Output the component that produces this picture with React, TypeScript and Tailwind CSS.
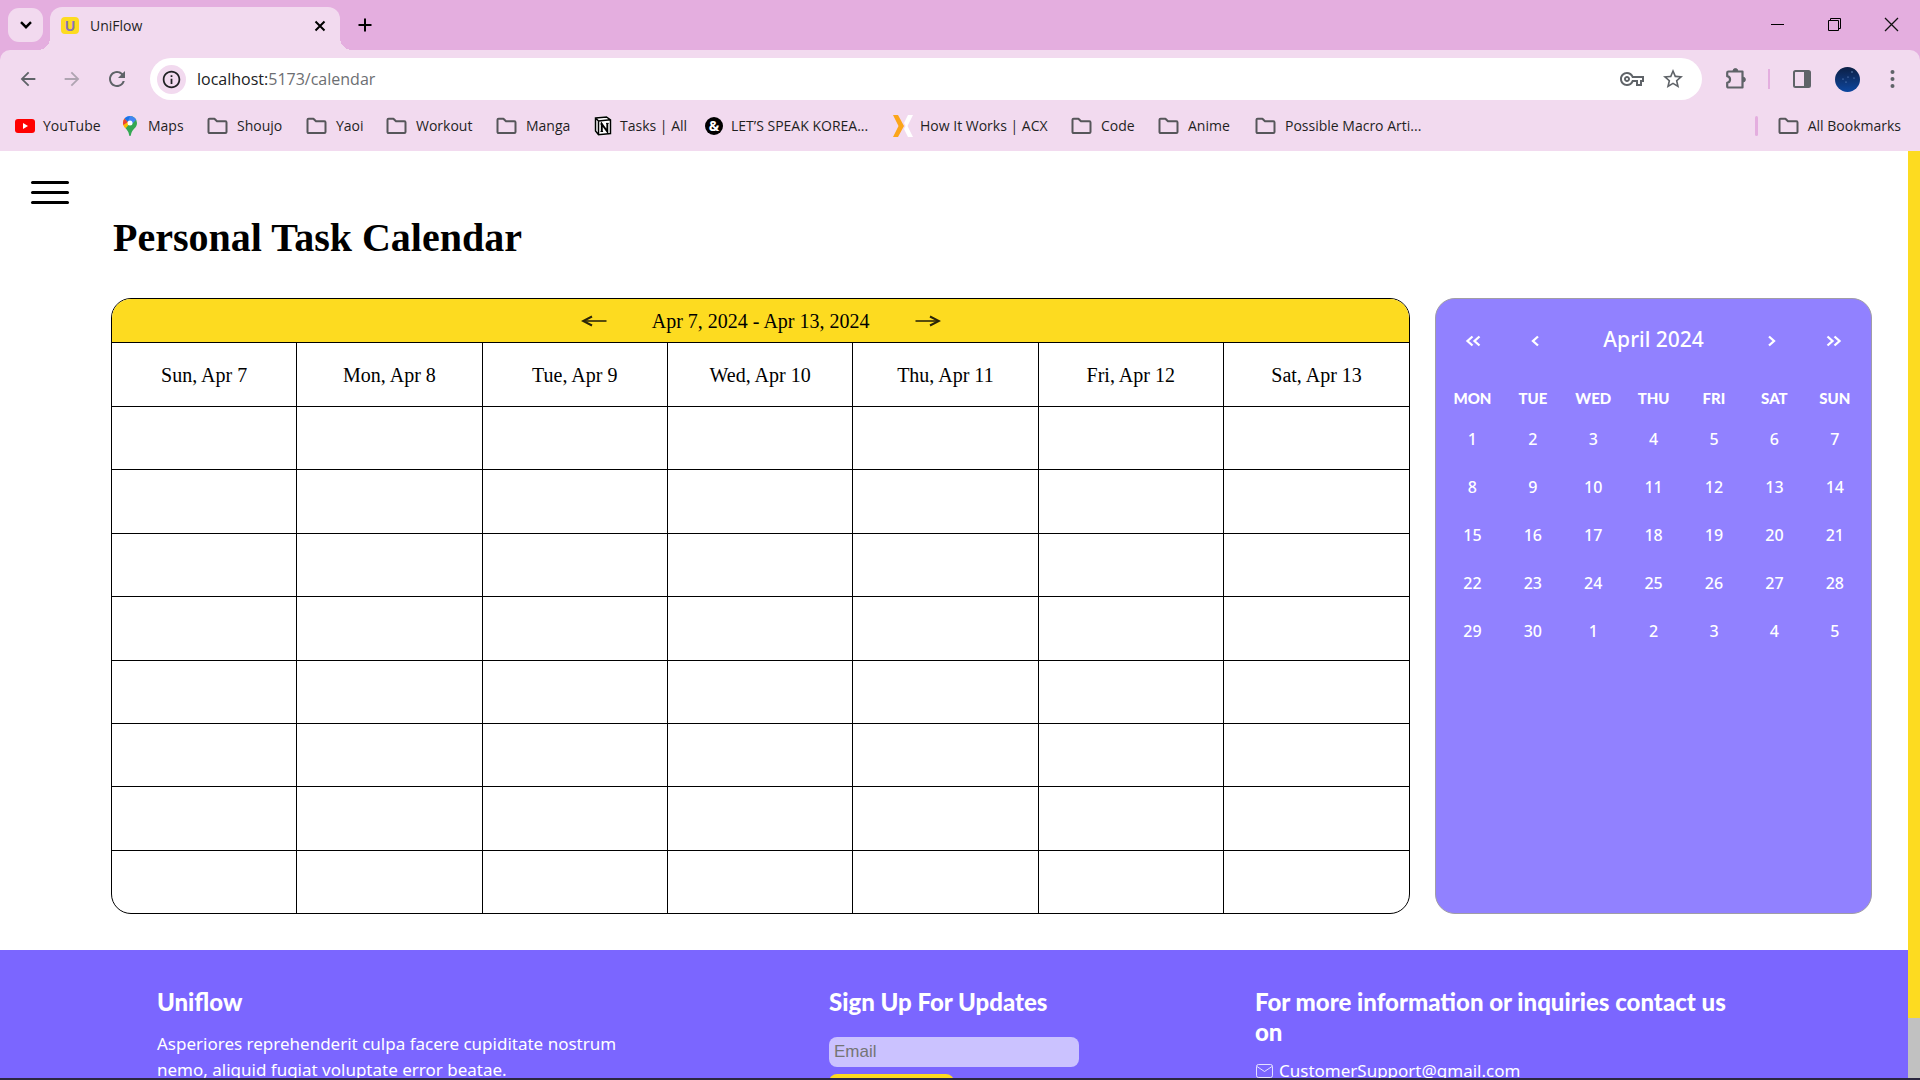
import React from "react";
import { MdArrowBack, MdArrowForward, MdRefresh, MdInfoOutline, MdOutlineVpnKey, MdStarOutline } from "react-icons/md";

const chromeFont = "font-['Open_Sans',sans-serif]";
const siteFont = "font-['Noto_Sans',sans-serif]";
const headingFont = "font-['Lato',sans-serif]";
const serifFont = "font-['Liberation_Serif',serif]";

function FolderIcon() {
  return (
    <svg width="21" height="18" viewBox="0 0 21 18" fill="none" stroke="#56565a" strokeWidth="2" strokeLinejoin="round">
      <path d="M1.500 15V2.800c0-.7.4-1.100 1.100-1.100h4.800l2.600 2.600h8.400c.7 0 1.100.4 1.100 1.100V15c0 .7-.4 1.100-1.100 1.100H2.600c-.7 0-1.100-.4-1.100-1.100z" />
    </svg>
  );
}

function YouTubeIcon() {
  return (
    <svg width="20" height="14" viewBox="0 0 20 14">
      <rect width="20" height="14" rx="3" fill="#f00" />
      <path d="M8 4l5 3-5 3z" fill="#fff" />
    </svg>
  );
}

function MapsIcon() {
  return (
    <svg width="14" height="20" viewBox="0 0 14 20">
      <path d="M7 0a7 7 0 0 1 7 7c0 5-5 6-6 11.500-.3 2-1.700 2-2 0C5.600 15.500 4 14 2.500 12z" fill="#34a853" />
      <path d="M1.600 2.600A7 7 0 0 0 .4 9.500c.4 1 1.200 2 2.100 3L9 5z" fill="#fbbc04" />
      <path d="M1.600 2.600A7 7 0 0 0 .3 9L5 6z" fill="#ea4335" />
      <path d="M1.600 2.600A7 7 0 0 1 13.200 3.800L8 9 5 6z" fill="#4285f4" />
      <path d="M1.600 2.600A7 7 0 0 1 7 0L4.800 5.800z" fill="#1a73e8" />
      <circle cx="7" cy="7" r="2.500" fill="#fff" />
    </svg>
  );
}

function NotionIcon() {
  return (
    <svg width="18" height="20" viewBox="0 0 18 20">
      <path d="M1 1.500L13 .5l4 3V18l-13 1.500-3-4z" fill="#fff" stroke="#fff" />
      <path d="M1.500 2L12.500 1l4 2.800V17.500L4.500 18.700 1.500 15z M1.500 2l3 3 12-1.200M4.500 5v13.500" fill="none" stroke="#000" strokeWidth="1.500" />
      <path d="M7.800 15.500V8l5.500 7.500V7.500" fill="none" stroke="#000" strokeWidth="1.900" />
      <path d="M6.300 8h2.200M12 7.400h2.700M6.500 15.500h2.600" stroke="#000" strokeWidth="1" />
    </svg>
  );
}

function AmpIcon() {
  return <span className="flex size-[18px] items-center justify-center rounded-full bg-black text-[14px] leading-none font-bold text-white">&amp;</span>;
}

function AcxIcon() {
  return (
    <svg width="20" height="22" viewBox="0 0 20 22">
      <path d="M0 0h5l6 11-6 11H0l5.500-11z" fill="#fba51a" />
      <path d="M20 0h-5l-4 8 1.500 3-1.500 3 4 8h5l-5.500-11z" fill="#fff" />
    </svg>
  );
}

const bookmarks = [
  { label: "YouTube", icon: <YouTubeIcon />, width: "w-[108px]", gap: "gap-2" },
  { label: "Maps", icon: <MapsIcon />, width: "w-[84px]", gap: "gap-[11px]" },
  { label: "Shoujo", icon: <FolderIcon />, width: "w-[99px]", gap: "gap-[9px]" },
  { label: "Yaoi", icon: <FolderIcon />, width: "w-20", gap: "gap-[9px]" },
  { label: "Workout", icon: <FolderIcon />, width: "w-[110px]", gap: "gap-[9px]" },
  { label: "Manga", icon: <FolderIcon />, width: "w-[98px]", gap: "gap-[9px]" },
  { label: "Tasks | All", icon: <NotionIcon />, width: "w-[111px]", gap: "gap-2" },
  { label: "LET’S SPEAK KOREA...", icon: <AmpIcon />, width: "w-[188px]", gap: "gap-2" },
  { label: "How It Works | ACX", icon: <AcxIcon />, width: "w-[178px]", gap: "gap-[7px]" },
  { label: "Code", icon: <FolderIcon />, width: "w-[87px]", gap: "gap-[9px]" },
  { label: "Anime", icon: <FolderIcon />, width: "w-[97px]", gap: "gap-[9px]" },
  { label: "Possible Macro Arti...", icon: <FolderIcon />, width: "w-[180px]", gap: "gap-[9px]" },
];

function TabStrip() {
  return (
    <div className="flex h-[50px] items-start bg-[#e4aedf]">
      <button aria-label="Search tabs" className="mt-2 ml-2 flex h-[34px] w-[35px] items-center justify-center rounded-[11px] bg-[#f2daef]">
        <svg width="12" height="8" viewBox="0 0 12 8" fill="none" stroke="#000" strokeWidth="2.400"><path d="M1 1.200l5 5 5-5" /></svg>
      </button>
      <div className="relative mt-[7px] ml-[7px] flex h-[43px] w-[290px] items-center rounded-t-xl bg-[#f2daef] pr-[14px] pb-4 pl-[11px] pt-[10px]">
        <span className="absolute bottom-0 -left-3 size-3 bg-[radial-gradient(circle_at_0_0,transparent_12px,#f2daef_12px)]" />
        <span className="absolute -right-3 bottom-0 size-3 bg-[radial-gradient(circle_at_100%_0,transparent_12px,#f2daef_12px)]" />
        <span className="flex h-[17px] w-[18px] items-center justify-center rounded bg-[#fddb20] font-['Liberation_Sans',sans-serif] text-[14px] leading-none font-bold text-[#8672b8]">U</span>
        <span className="ml-[11px] text-sm text-[#1f1f1f]">UniFlow</span>
        <button aria-label="Close tab" className="ml-auto">
          <svg width="12" height="12" viewBox="0 0 12 12" stroke="#000" strokeWidth="2"><path d="M1.500 1.500l9 9M10.500 1.500l-9 9" /></svg>
        </button>
      </div>
      <button aria-label="New tab" className="mt-[18px] ml-[18px]">
        <svg width="14" height="14" viewBox="0 0 14 14" stroke="#000" strokeWidth="2"><path d="M7 .5v13M.5 7h13" /></svg>
      </button>
      <div className="mt-[17px] mr-[21px] ml-auto flex gap-[42px]">
        <button aria-label="Minimize"><svg width="15" height="15" viewBox="0 0 15 15" stroke="#000"><path d="M1 7.500h13" /></svg></button>
        <button aria-label="Restore"><svg width="15" height="15" viewBox="0 0 15 15" fill="none" stroke="#000"><path d="M1.500 3.500h10v10h-10zM3.500 3.500v-2h10v10h-2" /></svg></button>
        <button aria-label="Close window"><svg width="15" height="15" viewBox="0 0 15 15" stroke="#111" strokeWidth="1.300"><path d="M1 1l13 13M14 1L1 14" /></svg></button>
      </div>
    </div>
  );
}

function Toolbar() {
  return (
    <div className="flex h-[58px] items-center text-[#5f6368]">
      <button aria-label="Back" className="ml-[17px]"><MdArrowBack size={22} /></button>
      <button aria-label="Forward" className="ml-[22px] opacity-45"><MdArrowForward size={22} /></button>
      <button aria-label="Reload" className="ml-[22px]"><MdRefresh size={24} /></button>
      <div className="relative ml-[21px] flex h-[42px] min-w-0 flex-1 items-center rounded-full bg-white pr-[17px] pl-[7px]">
        <button aria-label="Site information" className="flex size-[29px] items-center justify-center rounded-full bg-[#f2daef] text-[#202124]"><MdInfoOutline size={21} /></button>
        <span className="ml-[11px] flex-1 text-base text-[#6c6e72]"><span className="text-[#202124]">localhost:</span>5173/calendar</span>
        <button aria-label="Passwords"><MdOutlineVpnKey size={24} /></button>
        <button aria-label="Bookmark this page" className="ml-[17px]"><MdStarOutline size={24} /></button>
      </div>
      <button aria-label="Extensions" className="ml-[23px]">
        <svg width="22" height="22" viewBox="0 0 22 22" fill="none" stroke="currentColor" strokeWidth="2.200" strokeLinejoin="round">
          <path d="M3.500 3.500h14v16h-14c-1 0-1.300-.4-1.300-1.300v-3.400c3.800-.8 3.800-5.800 0-6.600V4.800c0-.9.400-1.300 1.300-1.300z" />
          <path d="M8 3a2.400 2.400 0 0 1 4.800 0zM18 9.200a2.400 2.400 0 0 1 0 4.800z" fill="currentColor" strokeWidth="1" />
        </svg>
      </button>
      <span className="ml-[21px] h-5 w-0.5 bg-[#e4aedf]" />
      <button aria-label="Side panel" className="ml-[23px]">
        <svg width="18" height="18" viewBox="0 0 18 18"><rect x="1" y="1" width="16" height="16" rx="1.500" fill="none" stroke="currentColor" strokeWidth="2" /><path d="M11 1h6v16h-6z" fill="currentColor" /></svg>
      </button>
      <button aria-label="Profile" className="ml-6 size-[25px] rounded-full bg-linear-to-b from-[#0b1f45] to-[#0c47a0]">
        <svg width="25" height="25" viewBox="0 0 25 25" fill="#7ea3d8"><circle cx="17" cy="5" r=".7" /><circle cx="8" cy="12" r=".6" /><circle cx="13" cy="10" r=".6" /><circle cx="19" cy="11" r=".6" /><circle cx="11" cy="15" r=".6" /></svg>
      </button>
      <button aria-label="Menu" className="mr-[25px] ml-[30px]">
        <svg width="5" height="18" viewBox="0 0 5 18" fill="currentColor"><circle cx="2.500" cy="2" r="2" /><circle cx="2.500" cy="9" r="2" /><circle cx="2.500" cy="16" r="2" /></svg>
      </button>
    </div>
  );
}

function BookmarksBar() {
  return (
    <nav aria-label="Bookmarks" className="flex h-[43px] items-center pb-[7px] pl-[15px] text-sm text-[#1f1f1f]">
      {bookmarks.map((b) => (
        <a key={b.label} href="#" className={`flex shrink-0 items-center whitespace-nowrap ${b.width} ${b.gap}`}>
          <span className="shrink-0">{b.icon}</span>
          {b.label}
        </a>
      ))}
      <span className="mr-5 ml-auto h-5 w-[3px] rounded bg-[#e4aedf]" />
      <a href="#" className="mr-[19px] flex items-center gap-[9px] whitespace-nowrap"><FolderIcon />All Bookmarks</a>
    </nav>
  );
}

const days = ["Sun, Apr 7", "Mon, Apr 8", "Tue, Apr 9", "Wed, Apr 10", "Thu, Apr 11", "Fri, Apr 12", "Sat, Apr 13"];

function ArrowIcon({ flip = false }: { flip?: boolean }) {
  return (
    <svg width="26" height="12" viewBox="0 0 26 12" fill="none" className={flip ? "rotate-180" : ""}>
      <path d="M3 6h22.500" stroke="#000" strokeOpacity=".65" strokeWidth="2" />
      <path d="M11 1.500L2 6l9 4.500" stroke="#2a2408" strokeWidth="2" />
    </svg>
  );
}

function WeekPlanner() {
  return (
    <section aria-label="Week" className={`min-w-0 overflow-hidden rounded-[20px] border border-black ${serifFont}`}>
      <div className="flex h-[43px] items-center justify-center gap-[45px] bg-[#fddb20] text-xl">
        <button aria-label="Previous week"><ArrowIcon /></button>
        <span>Apr 7, 2024 - Apr 13, 2024</span>
        <button aria-label="Next week"><ArrowIcon flip /></button>
      </div>
      <table className="h-[571px] w-full table-fixed border-separate border-spacing-0 text-xl">
        <tbody>
          <tr>
            {days.map((d) => (
              <th key={d} scope="col" className="h-16 border-t border-r border-black p-0 font-normal last:border-r-0">{d}</th>
            ))}
          </tr>
          {Array.from({ length: 8 }, (_, r) => (
            <tr key={r}>
              {days.map((d) => (
                <td key={d} className="border-t border-r border-black p-0 last:border-r-0" />
              ))}
            </tr>
          ))}
        </tbody>
      </table>
    </section>
  );
}

const weeks = [
  [1, 2, 3, 4, 5, 6, 7],
  [8, 9, 10, 11, 12, 13, 14],
  [15, 16, 17, 18, 19, 20, 21],
  [22, 23, 24, 25, 26, 27, 28],
  [29, 30, 1, 2, 3, 4, 5],
];

function Chevron({ double = false, flip = false }: { double?: boolean; flip?: boolean }) {
  return (
    <svg width={double ? 16 : 8} height="12" viewBox={double ? "0 0 16 12" : "0 0 8 12"} fill="none" stroke="#fff" strokeWidth="2.300" className={flip ? "mx-auto rotate-180" : "mx-auto"}>
      <path d={double ? "M7.500 1.500L2.500 6l5 4.500M14.500 1.500L9.500 6l5 4.500" : "M7 1.500L2 6l5 4.500"} />
    </svg>
  );
}

function MonthPicker() {
  return (
    <section aria-label="Month" className={`min-w-0 rounded-[20px] border border-[#a09da6] bg-[#9181ff] px-1.5 text-white ${siteFont}`}>
      <div className="mt-2 flex h-[66px] items-center text-[21px] font-medium">
        <button aria-label="Previous year" className="w-[62px] pt-0.5"><Chevron double /></button>
        <button aria-label="Previous month" className="w-[62px] pt-0.5"><Chevron /></button>
        <button className="flex-1">April 2024</button>
        <button aria-label="Next month" className="w-[62px] pt-0.5"><Chevron flip /></button>
        <button aria-label="Next year" className="w-[62px] pt-0.5"><Chevron double flip /></button>
      </div>
      <table className="mt-2 w-full table-fixed text-center">
        <thead>
          <tr className="h-[34px] text-[15px]">
            {["MON", "TUE", "WED", "THU", "FRI", "SAT", "SUN"].map((d) => (
              <th key={d} scope="col" className={`font-black ${headingFont}`}>{d}</th>
            ))}
          </tr>
        </thead>
        <tbody>
          {weeks.map((w, i) => (
            <tr key={i} className="h-12 text-base font-medium">
              {w.map((d) => (
                <td key={d}><button>{d}</button></td>
              ))}
            </tr>
          ))}
        </tbody>
      </table>
    </section>
  );
}

function Footer() {
  return (
    <footer className={`grid flex-1 grid-cols-[672fr_426fr_520fr] bg-[#7b66ff] pt-[37px] pr-[133px] pl-[157px] text-white ${siteFont}`}>
      <div>
        <h2 className={`text-2xl leading-[30px] font-black ${headingFont}`}>Uniflow</h2>
        <p className="mt-[14px] w-[490px] text-[17px] leading-[26px]">Asperiores reprehenderit culpa facere cupiditate nostrum nemo, aliquid fugiat voluptate error beatae.</p>
      </div>
      <div>
        <h2 className={`text-2xl leading-[30px] font-black ${headingFont}`}>Sign Up For Updates</h2>
        <input type="email" aria-label="Email" placeholder="Email" className="mt-5 block h-[30px] w-[250px] rounded-lg bg-[#cbc2ff] px-[5px] font-['Liberation_Sans',sans-serif] text-[17px] text-black placeholder:text-[#757575]" />
        <button aria-label="Sign up" className="mt-[7px] block h-9 w-[125px] rounded-lg bg-[#fddb20]" />
      </div>
      <div>
        <h2 className={`max-w-[495px] text-2xl leading-[30px] font-black ${headingFont}`}>For more information or inquiries contact us on</h2>
        <a href="mailto:CustomerSupport@gmail.com" className="mt-[11px] flex items-center gap-[5px] text-[17px] leading-[26px]">
          <svg width="19" height="16" viewBox="0 0 19 16" fill="none" stroke="#fff" strokeOpacity=".8"><rect x="1.500" y="1.500" width="16" height="13" rx="2" /><path d="M2 3.500l7.500 5 7.500-5" /></svg>
          CustomerSupport@gmail.com
        </a>
      </div>
    </footer>
  );
}

export default function App() {
  return (
    <div className={`flex h-screen flex-col overflow-hidden bg-white text-black ${chromeFont}`}>
      <header className="shrink-0 bg-[#e4aedf]">
        <TabStrip />
        <div className="rounded-t-[10px] bg-[#f2daef]">
          <Toolbar />
          <BookmarksBar />
        </div>
      </header>
      <div className="flex min-h-0 flex-1">
        <div className="flex min-w-0 flex-1 flex-col overflow-hidden">
          <main className="shrink-0 pb-9">
            <button aria-label="Open menu" className="mt-[30px] ml-[31px] flex w-[38px] flex-col gap-[7px]">
              <span className="h-[3px] w-full rounded bg-black" />
              <span className="h-[3px] w-full rounded bg-black" />
              <span className="h-[3px] w-full rounded bg-black" />
            </button>
            <h1 className={`mt-[10px] ml-[113px] text-[40px] leading-[48px] font-bold ${serifFont}`}>Personal Task Calendar</h1>
            <div className="mt-[36px] mr-9 ml-[111px] grid grid-cols-[1300fr_437fr] gap-[25px]">
              <WeekPlanner />
              <MonthPicker />
            </div>
          </main>
          <Footer />
        </div>
        <div className="flex w-3 flex-col bg-[#c1c1c1]"><div className="h-[867px] bg-[#fddb20]" /></div>
      </div>
      <div className="h-0.5 shrink-0 bg-[#2b2740]" />
    </div>
  );
}
